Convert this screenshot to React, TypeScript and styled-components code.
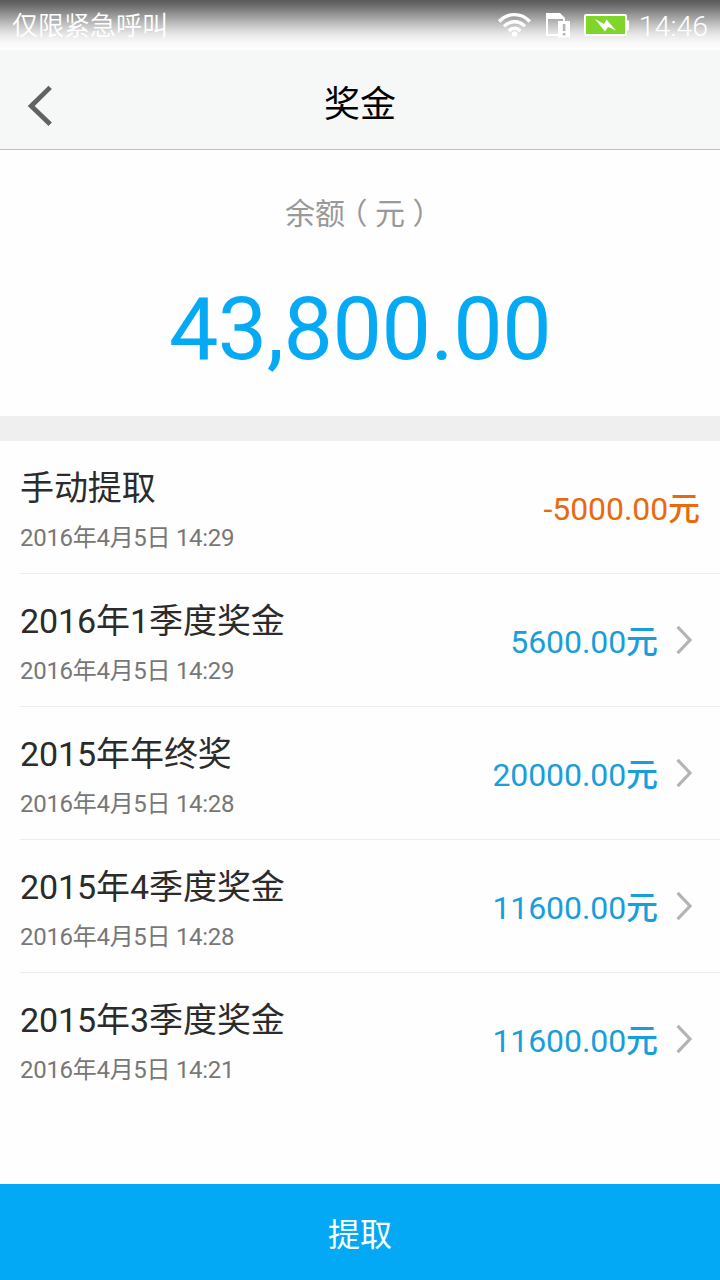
import React from 'react';
import styled, { createGlobalStyle } from 'styled-components';

const GlobalStyle = createGlobalStyle`
  * { box-sizing: border-box; }
  body {
    margin: 0;
    background: #fefefe;
    font-family: Roboto, "Noto Sans CJK SC", sans-serif;
  }
`;

const Screen = styled.div`
  display: flex;
  flex-direction: column;
  width: 720px;
  height: 1280px;
  overflow: hidden;
`;

const StatusBar = styled.header`
  display: flex;
  align-items: center;
  justify-content: space-between;
  height: 50px;
  padding: 0 12px;
  background: linear-gradient(#5a5a5a 0, #666 4px, #9b9b9b 16px, #c4c4c4 25px, #e6e6e6 34px, #f8f8f8 42px, #fefefe 50px);
  color: #fff;
`;

const Carrier = styled.span`
  padding-top: 2px;
  font-size: 26px;
  font-weight: 350;
  line-height: 48px;
`;

const StatusIcons = styled.div`
  display: flex;
  align-items: center;
  height: 50px;
`;

const IconSlot = styled.span<{ $gap: number }>`
  display: flex;
  margin-right: ${({ $gap }) => $gap}px;
`;

const Clock = styled.time`
  margin: 3px 0 0 9px;
  font-size: 28.5px;
  font-weight: 350;
  line-height: 50px;
`;

const NavBar = styled.nav`
  display: grid;
  grid-template-columns: 80px 1fr 80px;
  align-items: center;
  height: 100px;
  border-bottom: 1px solid #bfc0c0;
  background: #f6f8f7;
`;

const BackButton = styled.button`
  display: flex;
  padding: 12px 0 0 27px;
  border: 0;
  background: none;
`;

const PageTitle = styled.h1`
  margin: 11px 0 0;
  color: #000;
  font-size: 36px;
  font-weight: 400;
  line-height: 50px;
  text-align: center;
`;

const Balance = styled.section`
  height: 266px;
  padding-top: 39px;
  text-align: center;
`;

const BalanceLabel = styled.div`
  display: flex;
  justify-content: center;
  color: #999;
  font-family: "Noto Sans CJK SC", sans-serif;
  font-size: 30px;
  line-height: 44px;
`;

const Paren = styled.span`
  width: 15px;
  margin: 0 7.5px;
  font-feature-settings: "halt";
`;

const BalanceValue = styled.div`
  margin-top: 44px;
  color: #05a9f4;
  font-size: 88px;
  line-height: 104px;
  letter-spacing: -0.5px;
`;

const Divider = styled.div`
  flex: none;
  height: 25px;
  background: #efefef;
`;

const List = styled.ul`
  flex: 1;
  margin: 0;
  padding: 0 0 0 20px;
  list-style: none;
`;

const Row = styled.li`
  display: flex;
  align-items: center;
  justify-content: space-between;
  height: 133px;
  padding-right: 20px;
  border-bottom: 1px solid #ececec;
  &:last-child { border-bottom-color: transparent; }
`;

const RowText = styled.div`
  padding-top: 5px;
`;

const RowTitle = styled.div`
  color: #2b2b2b;
  font-size: 34px;
  line-height: 50px;
  letter-spacing: -0.08px;
`;

const RowDate = styled.div`
  margin-top: 7px;
  color: #777;
  font-size: 24px;
  line-height: 36px;
  letter-spacing: -0.3px;
`;

const RowEnd = styled.div`
  display: flex;
  align-items: center;
`;

const Amount = styled.span<{ $out?: boolean }>`
  color: ${({ $out }) => ($out ? '#e8690f' : '#1a9edb')};
  margin-top: 4px;
  font-size: 32px;
  line-height: 44px;
  letter-spacing: -0.08px;
`;

const Unit = styled.span`
  font-weight: 500;
`;

const Chevron = styled.svg`
  display: block;
  margin-left: 18px;
  margin-right: 7px;
`;

const WithdrawButton = styled.button`
  flex: none;
  height: 96px;
  padding: 0;
  border: 0;
  background: #03a9f4;
  color: #fff;
  font-family: inherit;
  font-size: 32px;
`;

const records = [
  { title: '手动提取', date: '2016年4月5日 14:29', amount: '-5000.00', out: true },
  { title: '2016年1季度奖金', date: '2016年4月5日 14:29', amount: '5600.00' },
  { title: '2015年年终奖', date: '2016年4月5日 14:28', amount: '20000.00' },
  { title: '2015年4季度奖金', date: '2016年4月5日 14:28', amount: '11600.00' },
  { title: '2015年3季度奖金', date: '2016年4月5日 14:21', amount: '11600.00' },
];

const WifiIcon = () => (
  <svg width="34" height="26" viewBox="0 0 34 26" fill="none" stroke="#fff" strokeWidth="3.4">
    <path d="M1.2 9.5C10 0.3 23 0.3 31.8 9.5" />
    <path d="M6 14.4C12 8.2 21 8.2 27 14.4" />
    <path d="M10.8 19C14 15.4 19 15.4 22.2 19" />
    <circle cx="16.5" cy="22" r="2.8" fill="#fff" stroke="none" />
  </svg>
);

const SimAlertIcon = () => (
  <svg width="25" height="25" viewBox="0 0 25 25">
    <path fill="#fff" fillRule="evenodd" d="M0 0H14L19 5V8H24V24.5H12V23H0ZM2 6V21H12V8H17V6Z" />
    <path fill="#b5b5b5" d="M16.8 11H19.4V18H16.8ZM16.8 20H19.4V22.5H16.8Z" />
  </svg>
);

const BatteryIcon = () => (
  <svg width="46" height="24" viewBox="0 0 46 24">
    <rect x="1" y="2" width="41" height="20" rx="1" fill="#80d52b" stroke="#fff" strokeWidth="2" />
    <path fill="#fff" d="M42 7.5H45V17.5H42ZM11 6L20 11L22.5 6.5L32 17.5L24 14L21 18.5Z" />
  </svg>
);

const App = () => (
  <>
    <GlobalStyle />
    <Screen>
      <StatusBar>
        <Carrier>仅限紧急呼叫</Carrier>
        <StatusIcons>
          <IconSlot $gap={14}><WifiIcon /></IconSlot>
          <IconSlot $gap={13}><SimAlertIcon /></IconSlot>
          <IconSlot $gap={0}><BatteryIcon /></IconSlot>
          <Clock>14:46</Clock>
        </StatusIcons>
      </StatusBar>
      <NavBar>
        <BackButton aria-label="返回">
          <svg width="26" height="42" viewBox="0 0 26 42" fill="none" stroke="#626262" strokeWidth="4.8">
            <path d="M23.2 2.4L4.2 21L23.2 39.2" />
          </svg>
        </BackButton>
        <PageTitle>奖金</PageTitle>
      </NavBar>
      <Balance>
        <BalanceLabel>
          余额<Paren>（</Paren>元<Paren>）</Paren>
        </BalanceLabel>
        <BalanceValue>43,800.00</BalanceValue>
      </Balance>
      <Divider />
      <List>
        {records.map((r) => (
          <Row key={r.title}>
            <RowText>
              <RowTitle>{r.title}</RowTitle>
              <RowDate>{r.date}</RowDate>
            </RowText>
            <RowEnd>
              <Amount $out={r.out}>{r.amount}<Unit>元</Unit></Amount>
              {!r.out && (
                <Chevron width="17" height="30" viewBox="0 0 17 30" fill="none" stroke="#b4b4b4" strokeWidth="3.2">
                  <path d="M1.6 1.8L14 15L1.6 28.2" />
                </Chevron>
              )}
            </RowEnd>
          </Row>
        ))}
      </List>
      <WithdrawButton>提取</WithdrawButton>
    </Screen>
  </>
);

export default App;
